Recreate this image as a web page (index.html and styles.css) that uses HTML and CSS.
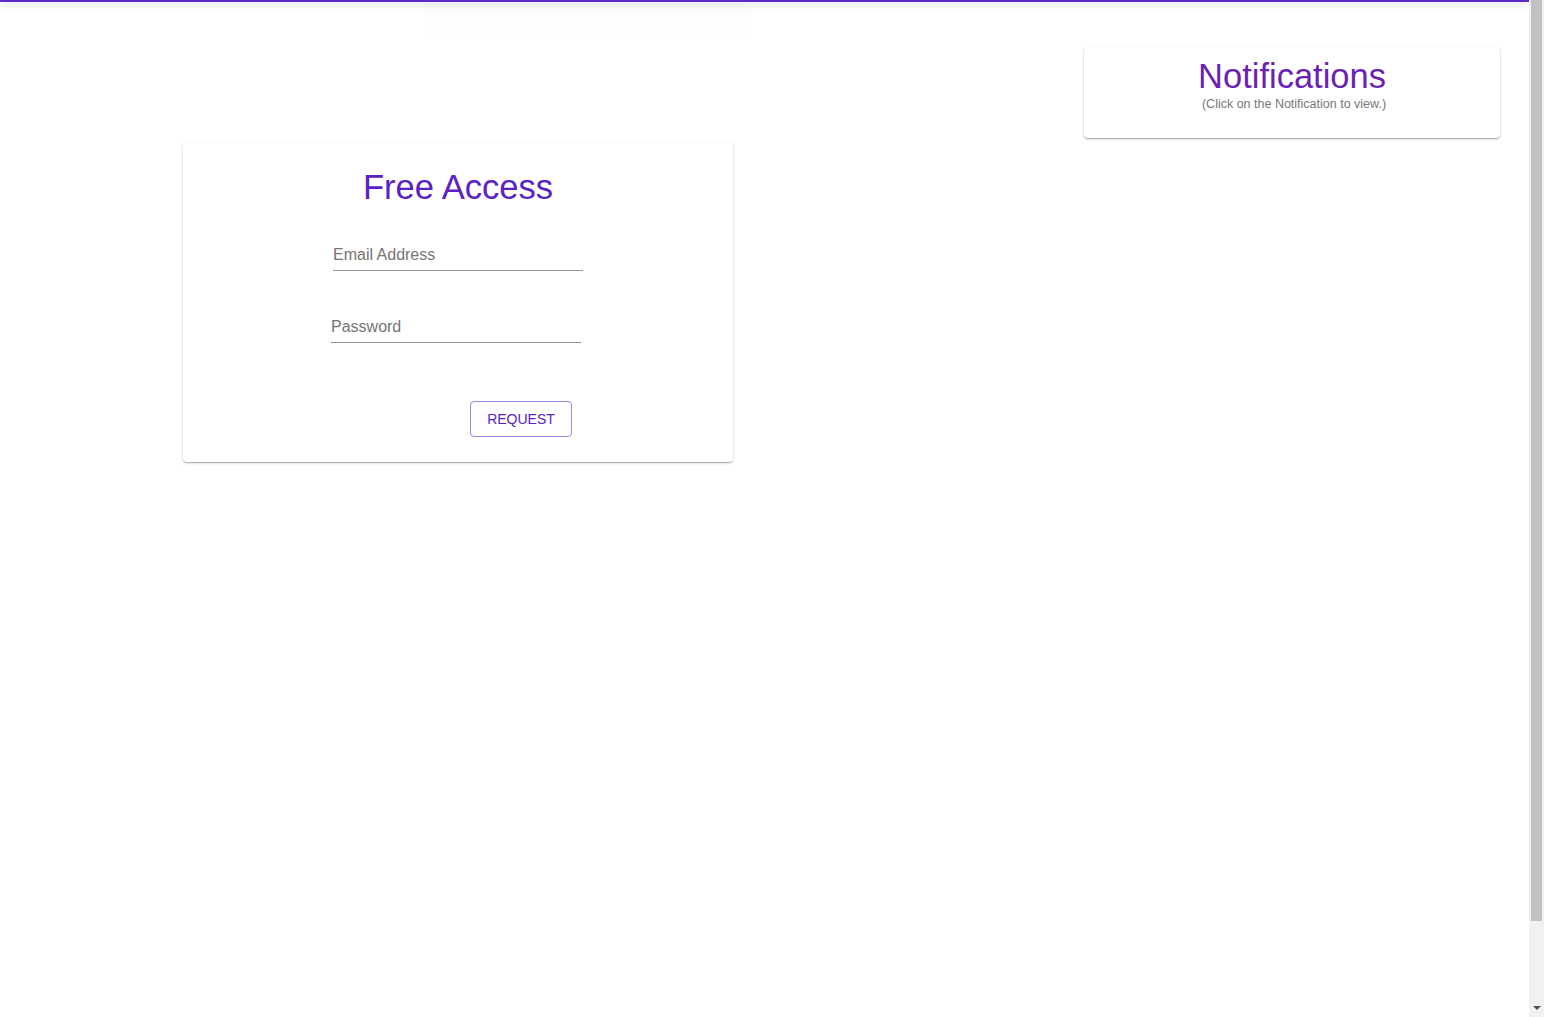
FILE: index.html
```html
<!DOCTYPE html>
<html lang="en">
<head>
<meta charset="utf-8">
<title>Free Access</title>
<link rel="stylesheet" href="styles.css">
</head>
<body>
<div class="page">
  <div class="topbar"></div>
  <div class="ghost"></div>
  <main class="layout">
    <section class="card access">
      <h1 class="access-title">Free Access</h1>
      <form class="form">
        <input class="field" type="email" placeholder="Email Address">
        <input class="field field-pw" type="password" placeholder="Password">
        <button class="btn" type="button">REQUEST</button>
      </form>
    </section>
    <aside class="card notes">
      <h2 class="notes-title">Notifications</h2>
      <p class="notes-sub">(Click on the Notification to view.)</p>
    </aside>
  </main>
</div>
<div class="scrollbar" aria-hidden="true">
  <div class="scroll-thumb"></div>
  <div class="scroll-down"></div>
</div>
</body>
</html>
```

FILE: styles.css
```css
html, body {
  margin: 0;
  padding: 0;
  background: #ffffff;
  font-family: "Liberation Sans", Arial, sans-serif;
  overflow: hidden;
}
.page {
  width: 1529px;
  height: 1017px;
  position: relative;
}
.topbar {
  position: relative;
  z-index: 2;
  height: 2px;
  background: #5b2bc8;
  box-shadow: 0 2px 8px rgba(0, 0, 0, 0.28);
}
.ghost {
  position: absolute;
  z-index: 1;
  left: 424px;
  top: 2px;
  width: 321px;
  height: 32px;
  background: #fdfdfd;
}
.layout {
  display: flex;
  justify-content: space-between;
  align-items: flex-start;
  padding: 45px 29px 0 183px;
}
.card {
  background: #fff;
  border-radius: 4px;
  box-shadow: 0 1px 3px rgba(0, 0, 0, 0.2), 0 1px 1px rgba(0, 0, 0, 0.12), 0 2px 1px -1px rgba(0, 0, 0, 0.1);
  box-sizing: border-box;
}
.access {
  width: 550px;
  margin-top: 96px;
  padding: 24px 0 25px;
  display: flex;
  flex-direction: column;
  align-items: center;
}
.access-title {
  margin: 0;
  font-size: 34.6px;
  line-height: 40px;
  font-weight: 400;
  color: #5a22c4;
}
.form {
  display: flex;
  flex-direction: column;
  align-items: center;
  margin-top: 38px;
}
.field {
  width: 250px;
  height: 20px;
  padding: 0 0 5px 0;
  border: none;
  border-bottom: 1px solid #949494;
  font-family: "Liberation Sans", Arial, sans-serif;
  font-size: 16px;
  color: #333;
  background: transparent;
  outline: none;
  box-sizing: content-box;
}
.field::placeholder {
  color: #757575;
  opacity: 1;
}
.field-pw {
  margin-top: 46px;
  margin-right: 4px;
}
.btn {
  margin-top: 58px;
  margin-left: 126px;
  height: 36px;
  padding: 0 16px;
  border: 1px solid #a283e6;
  border-radius: 4px;
  background: #fff;
  color: #5a22c4;
  font-family: "Liberation Sans", Arial, sans-serif;
  font-size: 14px;
  cursor: pointer;
}
.notes {
  width: 416px;
  padding: 9px 0 26px;
  text-align: center;
}
.notes-title {
  margin: 0;
  font-size: 34.5px;
  line-height: 40px;
  font-weight: 400;
  color: #6a1fb5;
}
.notes-sub {
  margin: 1px 0 0 4px;
  font-size: 12.5px;
  line-height: 15px;
  color: #777;
}
.scrollbar {
  position: fixed;
  top: 0;
  right: 0;
  width: 15px;
  height: 100%;
  background: #f1f1f1;
  z-index: 5;
}
.scroll-thumb {
  position: absolute;
  top: 0;
  left: 2px;
  width: 11px;
  height: 921px;
  background: #c1c1c1;
}
.scroll-down {
  position: absolute;
  left: 4px;
  bottom: 7px;
  width: 0;
  height: 0;
  border-left: 4px solid transparent;
  border-right: 4px solid transparent;
  border-top: 4px solid #505050;
}
```
